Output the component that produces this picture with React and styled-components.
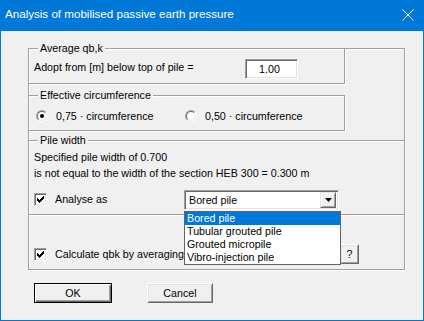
import React from 'react';
import styled, { createGlobalStyle } from 'styled-components';

const GlobalStyle = createGlobalStyle`
  html, body {
    margin: 0;
    padding: 0;
    background: #f0f0f0;
  }
  body {
    font-family: "Liberation Sans", Arial, sans-serif;
    font-size: 10.7px;
    color: #000;
  }
  * {
    box-sizing: border-box;
  }
`;

const Window = styled.div`
  width: 424px;
  height: 321px;
  border: 1px solid #0078d7;
  background: #f0f0f0;
  display: flex;
  flex-direction: column;
`;

const TitleBar = styled.div`
  height: 30px;
  flex-shrink: 0;
  background: #0078d7;
  color: #fff;
  display: flex;
  align-items: flex-start;
  padding: 6px 0 0 4px;
  font-size: 11.6px;
  line-height: 14px;
`;

const Title = styled.span`
  flex: 1;
`;

const CloseIcon = styled.svg`
  margin: 2px 9px 0 0;
`;

const Body = styled.div`
  padding: 17px 0 0 27px;
`;

const Frame = styled.div`
  position: relative;
  width: 377px;
  height: 222px;
  border: 1px solid #a0a0a0;
  box-shadow: inset 1px 1px 0 #fff, 1px 1px 0 #fff;
  display: flex;
  flex-direction: column;
`;

const Legend = styled.span`
  position: absolute;
  top: -7px;
  left: 9px;
  padding: 0 2px;
  background: #f0f0f0;
  line-height: 13px;
  white-space: nowrap;
`;

const AverageBox = styled.div`
  position: relative;
  width: 316px;
  height: 35px;
  flex-shrink: 0;
  border-right: 1px solid #a0a0a0;
  border-bottom: 1px solid #a0a0a0;
  box-shadow: 1px 1px 0 #fff;
  padding: 10px 0 0 5px;
`;

const CircumBox = styled.div`
  position: relative;
  width: 316px;
  height: 36px;
  flex-shrink: 0;
  margin-top: 11px;
  border: 1px solid #a0a0a0;
  border-left: none;
  box-shadow: inset 0 1px 0 #fff, 1px 1px 0 #fff;
  padding: 13px 0 0 7px;
  display: flex;
`;

const PileBox = styled.div`
  position: relative;
  height: 75px;
  flex-shrink: 0;
  margin-top: 9px;
  border-top: 1px solid #a0a0a0;
  border-bottom: 1px solid #a0a0a0;
  box-shadow: inset 0 1px 0 #fff, 0 1px 0 #fff;
  padding: 10px 0 0 5px;
`;

const LowerBox = styled.div`
  flex: 1;
  padding: 33px 45px 0 5px;
`;

const Row = styled.div`
  display: flex;
  align-items: flex-start;
  line-height: 13px;
  margin-top: ${p => p.top || 0}px;
`;

const Text = styled.div`
  line-height: 13px;
  white-space: nowrap;
  margin-top: ${p => p.top || 0}px;
`;

const FieldLabel = styled.span`
  width: 211px;
  margin-top: 2px;
  white-space: nowrap;
`;

const Edit = styled.div`
  width: 53px;
  height: 20px;
  background: #fff;
  border: 1px solid;
  border-color: #a0a0a0 #fff #fff #a0a0a0;
  box-shadow: inset 1px 1px 0 #696969, inset -1px -1px 0 #e3e3e3;
  text-align: center;
  line-height: 18px;
  padding-right: 4px;
`;

const RadioItem = styled.label`
  display: flex;
  align-items: center;
  gap: 8px;
  width: ${p => p.width}px;
  height: 13px;
  white-space: nowrap;
`;

const RadioOuter = styled.span`
  width: 12px;
  height: 12px;
  border-radius: 50%;
  border: 1px solid;
  border-color: #a0a0a0 #fff #fff #a0a0a0;
  display: flex;
`;

const RadioInner = styled.span`
  flex: 1;
  border-radius: 50%;
  border: 1px solid;
  border-color: #696969 #e3e3e3 #e3e3e3 #696969;
  background: #fff;
  display: flex;
  align-items: center;
  justify-content: center;

  &::after {
    content: '';
    width: 4px;
    height: 4px;
    border-radius: 50%;
    background: ${p => (p.checked ? '#000' : 'transparent')};
  }
`;

const CheckBox = styled.span`
  width: 13px;
  height: 13px;
  flex-shrink: 0;
  background: #fff;
  border: 1px solid;
  border-color: #a0a0a0 #fff #fff #a0a0a0;
  box-shadow: inset 1px 1px 0 #696969, inset -1px -1px 0 #e3e3e3;
  display: flex;
  align-items: center;
  justify-content: center;
  margin-right: 8px;
`;

const CheckLabel = styled.span`
  width: 129px;
  flex-shrink: 0;
  white-space: nowrap;
  overflow: hidden;
`;

const Combo = styled.div`
  position: relative;
  width: 155px;
  height: 20px;
  margin-top: -3px;
  background: #fff;
  border: 1px solid;
  border-color: #a0a0a0 #fff #fff #a0a0a0;
  box-shadow: inset 1px 1px 0 #696969, inset -1px -1px 0 #e3e3e3;
  display: flex;
  align-items: center;
  padding: 0 2px 0 4px;
`;

const ComboValue = styled.span`
  flex: 1;
`;

const ComboButton = styled.span`
  width: 16px;
  height: 16px;
  background: #f0f0f0;
  border: 1px solid;
  border-color: #e3e3e3 #696969 #696969 #e3e3e3;
  box-shadow: inset 1px 1px 0 #fff, inset -1px -1px 0 #a0a0a0;
  display: flex;
  align-items: center;
  justify-content: center;
`;

const List = styled.ul`
  position: absolute;
  z-index: 5;
  top: 20px;
  left: -1px;
  width: 157px;
  margin: 0;
  padding: 0;
  list-style: none;
  background: #fff;
  border: 1px solid #646464;
`;

const ListItem = styled.li`
  height: 13px;
  line-height: 13px;
  padding-left: 2px;
  white-space: nowrap;
  background: ${p => (p.selected ? '#0078d7' : 'transparent')};
  color: ${p => (p.selected ? '#fff' : '#000')};
`;

const Button = styled.button`
  width: ${p => p.width}px;
  height: 20px;
  padding: 0;
  font: inherit;
  color: #000;
  background: #f0f0f0;
  border: 1px solid;
  border-color: ${p => (p.isDefault ? '#000' : '#fff #696969 #696969 #fff')};
  box-shadow: ${p =>
    p.isDefault
      ? 'inset 1px 1px 0 #fff, inset -1px -1px 0 #696969, inset -2px -2px 0 #a0a0a0'
      : 'inset 1px 1px 0 #e3e3e3, inset -1px -1px 0 #a0a0a0'};
  flex-shrink: 0;
`;

const HelpButton = styled(Button)`
  margin: -4px 0 0 auto;
`;

const ButtonRow = styled.div`
  display: flex;
  gap: 35px;
  margin: 13px 0 0 6px;
`;

function Check() {
  const cols = [2, 3, 4, 3, 2, 1, 0];
  return (
    <svg width="7" height="7" viewBox="0 0 7 7">
      {cols.map((y, x) => (
        <rect key={x} x={x} y={y} width="1" height="3" fill="#000" />
      ))}
    </svg>
  );
}

const pileTypes = ['Bored pile', 'Tubular grouted pile', 'Grouted micropile', 'Vibro-injection pile'];

export default function App() {
  return (
    <>
      <GlobalStyle />
      <Window>
        <TitleBar>
          <Title>Analysis of mobilised passive earth pressure</Title>
          <CloseIcon width="12" height="12" viewBox="0 0 12 12">
            <path d="M0.5 0.5 L11.5 11.5 M11.5 0.5 L0.5 11.5" stroke="#fff" strokeWidth="1" />
          </CloseIcon>
        </TitleBar>
        <Body>
          <Frame>
            <AverageBox>
              <Legend>Average qb,k</Legend>
              <Row>
                <FieldLabel>Adopt from [m] below top of pile =</FieldLabel>
                <Edit>1.00</Edit>
              </Row>
            </AverageBox>

            <CircumBox>
              <Legend>Effective circumference</Legend>
              <RadioItem width={149}>
                <RadioOuter>
                  <RadioInner checked />
                </RadioOuter>
                0,75 · circumference
              </RadioItem>
              <RadioItem width={150}>
                <RadioOuter>
                  <RadioInner />
                </RadioOuter>
                0,50 · circumference
              </RadioItem>
            </CircumBox>

            <PileBox>
              <Legend>Pile width</Legend>
              <Text>Specified pile width of 0.700</Text>
              <Text top={3}>is not equal to the width of the section HEB 300 = 0.300 m</Text>
              <Row top={13}>
                <CheckBox>
                  <Check />
                </CheckBox>
                <CheckLabel>Analyse as</CheckLabel>
                <Combo>
                  <ComboValue>Bored pile</ComboValue>
                  <ComboButton>
                    <svg width="7" height="4" viewBox="0 0 7 4">
                      <polygon points="0,0 7,0 3.5,4" fill="#000" />
                    </svg>
                  </ComboButton>
                  <List>
                    {pileTypes.map((t, i) => (
                      <ListItem key={t} selected={i === 0}>
                        {t}
                      </ListItem>
                    ))}
                  </List>
                </Combo>
              </Row>
            </PileBox>

            <LowerBox>
              <Row>
                <CheckBox>
                  <Check />
                </CheckBox>
                <CheckLabel>Calculate qbk by averaging</CheckLabel>
                <HelpButton width={19}>?</HelpButton>
              </Row>
            </LowerBox>
          </Frame>

          <ButtonRow>
            <Button width={78} isDefault>OK</Button>
            <Button width={66}>Cancel</Button>
          </ButtonRow>
        </Body>
      </Window>
    </>
  );
}
